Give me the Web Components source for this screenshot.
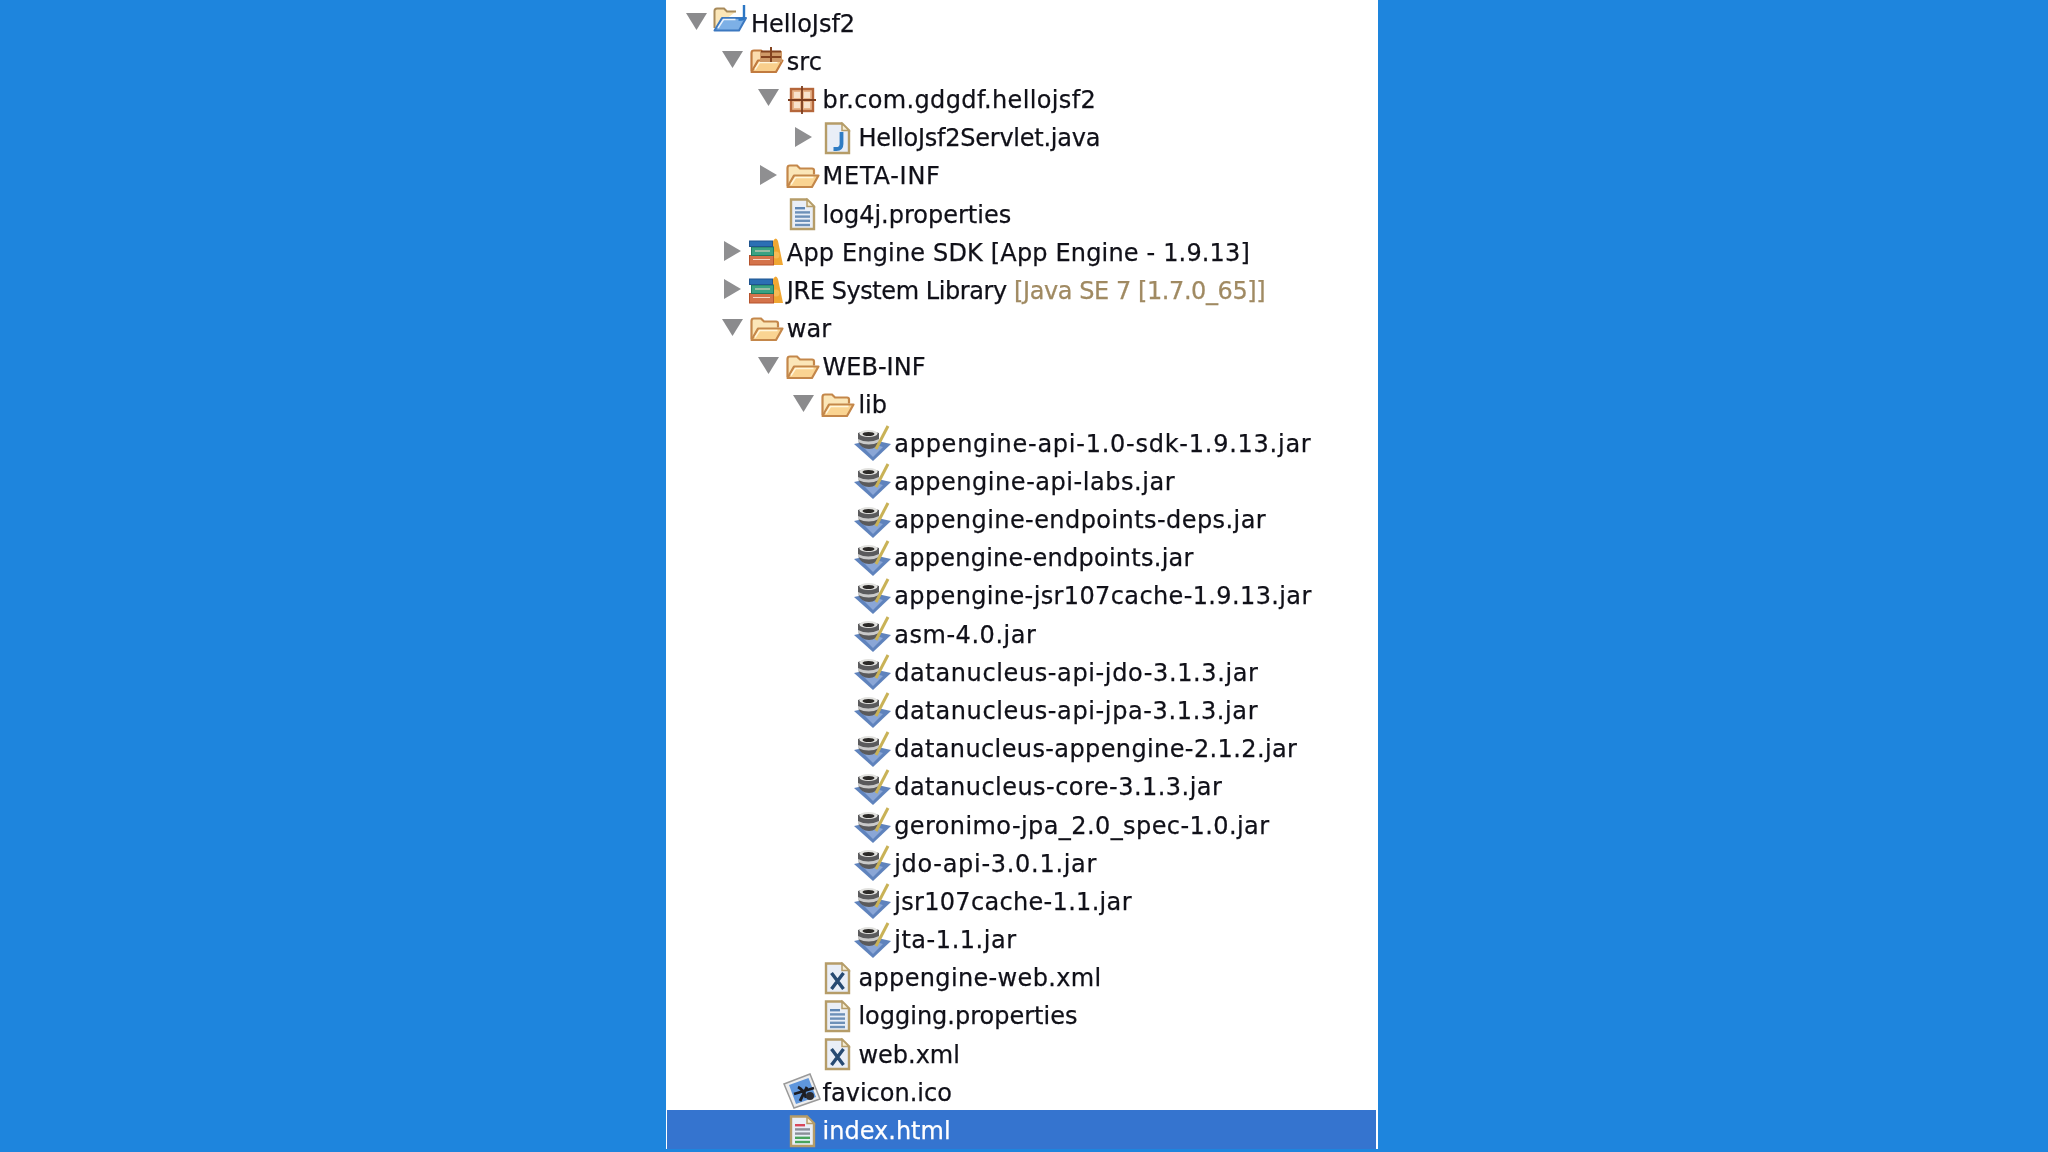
<!DOCTYPE html>
<html>
<head>
<meta charset="utf-8">
<title>HelloJsf2</title>
<style>
  html, body { margin: 0; height: 100%; background: #1e85dd; overflow: hidden; }
  body { display: flex; padding-left: 666px; }
</style>
</head>
<body>
<tree-panel>
  <tree-row depth="0" twisty="open" icon="project">HelloJsf2</tree-row>
  <tree-row depth="1" twisty="open" icon="srcfolder">src</tree-row>
  <tree-row depth="2" twisty="open" icon="package" track="0.36">br.com.gdgdf.hellojsf2</tree-row>
  <tree-row depth="3" twisty="closed" icon="java" track="-0.25">HelloJsf2Servlet.java</tree-row>
  <tree-row depth="2" twisty="closed" icon="folder">META-INF</tree-row>
  <tree-row depth="2" icon="doc">log4j.properties</tree-row>
  <tree-row depth="1" twisty="closed" icon="library">App Engine SDK [App Engine - 1.9.13]</tree-row>
  <tree-row depth="1" twisty="closed" icon="library" track="-0.42">JRE System Library <span slot="note">[Java SE 7 [1.7.0_65]]</span></tree-row>
  <tree-row depth="1" twisty="open" icon="folder">war</tree-row>
  <tree-row depth="2" twisty="open" icon="folder" track="0">WEB-INF</tree-row>
  <tree-row depth="3" twisty="open" icon="folder">lib</tree-row>
  <tree-row depth="4" icon="jar">appengine-api-1.0-sdk-1.9.13.jar</tree-row>
  <tree-row depth="4" icon="jar">appengine-api-labs.jar</tree-row>
  <tree-row depth="4" icon="jar">appengine-endpoints-deps.jar</tree-row>
  <tree-row depth="4" icon="jar">appengine-endpoints.jar</tree-row>
  <tree-row depth="4" icon="jar">appengine-jsr107cache-1.9.13.jar</tree-row>
  <tree-row depth="4" icon="jar">asm-4.0.jar</tree-row>
  <tree-row depth="4" icon="jar">datanucleus-api-jdo-3.1.3.jar</tree-row>
  <tree-row depth="4" icon="jar">datanucleus-api-jpa-3.1.3.jar</tree-row>
  <tree-row depth="4" icon="jar">datanucleus-appengine-2.1.2.jar</tree-row>
  <tree-row depth="4" icon="jar">datanucleus-core-3.1.3.jar</tree-row>
  <tree-row depth="4" icon="jar">geronimo-jpa_2.0_spec-1.0.jar</tree-row>
  <tree-row depth="4" icon="jar">jdo-api-3.0.1.jar</tree-row>
  <tree-row depth="4" icon="jar">jsr107cache-1.1.jar</tree-row>
  <tree-row depth="4" icon="jar">jta-1.1.jar</tree-row>
  <tree-row depth="3" icon="xml">appengine-web.xml</tree-row>
  <tree-row depth="3" icon="doc">logging.properties</tree-row>
  <tree-row depth="3" icon="xml">web.xml</tree-row>
  <tree-row depth="2" icon="image">favicon.ico</tree-row>
  <tree-row depth="2" icon="html" selected>index.html</tree-row>
</tree-panel>

<script>
const FILE = (inner) => `
  <path d="M6 4.500h16l7 7v22.500H6z" fill="#e9eef7" stroke="#b59c68" stroke-width="2.400"/>
  <path d="M22 4.500v7h7z" fill="#f6edd2" stroke="#b59c68" stroke-width="1.500"/>
  ${inner}`;

const LINES = (colors) => colors.map((c, i) =>
  `<rect x="10" y="${12 + i * 4.2}" width="${i === 0 ? 10 : 15}" height="2.400" fill="${c}"/>`).join('');

const OPEN_FOLDER = (back, front, edge) => `
  <path d="M2.500 29V11q0-2.500 2.500-2.500h7l3 3h12q2 0 2 2v4" fill="${back}" stroke="${edge}" stroke-width="2.200"/>
  <path d="M2.500 30 9 18.500h24.500L27 30z" fill="${front}" stroke="${edge}" stroke-width="2.200" stroke-linejoin="round"/>
  <path d="M6 27.500 10.500 20.500h18" fill="none" stroke="#fff6dc" stroke-width="1.400"/>`;

const ICONS = {
  folder: OPEN_FOLDER('#fbe6b8', '#fad492', '#c4874a'),
  project: `
    <path d="M1.500 24V7q0-2.500 2.500-2.500h7l3 3h9" fill="#fbe6b8" stroke="#a88a5a" stroke-width="2"/>
    <path d="M1.500 26.500 9 14h18l6 0-7 12.500z" fill="#7db0e6" stroke="#3c78c0" stroke-width="2" stroke-linejoin="round"/>
    <path d="M5 24 10.500 15.500h12" fill="none" stroke="#eaf2fb" stroke-width="1.500"/>
    <path d="M31 1v11.500q0 3-3 3h-2.500" fill="none" stroke="#2b76c4" stroke-width="2.400"/>`,
  srcfolder: `
    ${OPEN_FOLDER('#fbdcae', '#f9cf8c', '#c17b3f')}
    <rect x="11" y="9" width="22" height="11" fill="#cf9a68"/>
    <path d="M22 5v15M12 9.500h20M12 15h20" stroke="#83431f" stroke-width="2" fill="none"/>`,
  package: `
    <rect x="6" y="9" width="22" height="22" fill="#e8b48a" stroke="#b5663a" stroke-width="2.400"/>
    <rect x="9" y="12" width="6" height="6" fill="#f8e2cc"/>
    <rect x="19" y="12" width="6" height="6" fill="#f8e2cc"/>
    <rect x="9" y="22" width="6" height="6" fill="#f8e2cc"/>
    <rect x="19" y="22" width="6" height="6" fill="#f8e2cc"/>
    <path d="M17 6v28M3 20h28" stroke="#7c3d1e" stroke-width="1.800"/>`,
  java: FILE(`<path d="M21.500 13v12q0 5-5 5h-3" fill="none" stroke="#2f7cc4" stroke-width="3.800"/>`),
  doc: FILE(LINES(['#5e86b4', '#6d90b8', '#6d90b8', '#6d90b8', '#6d90b8'])),
  xml: FILE(`<path d="M11.500 14 23.500 30M23.500 14 11.500 30" stroke="#274a72" stroke-width="3.400"/>`),
  html: FILE(LINES(['#d8475a', '#8a8f98', '#8a8f98', '#49a45c', '#49a45c'])),
  library: `
    <path d="M24 8q3-5 5 0l5 24h-10z" fill="#f0a733"/>
    <circle cx="27" cy="22" r="3.500" fill="#f6bb55"/>
    <rect x="0.500" y="22.500" width="24" height="9.500" fill="#d4734b" stroke="#b5532c"/>
    <rect x="2.500" y="14" width="22" height="8.500" fill="#3aa283" stroke="#1f7a5e"/>
    <rect x="0.500" y="8" width="23" height="5.500" fill="#2b6fb4" stroke="#1f548f"/>
    <path d="M4 26.500h17M6 18h15" stroke="#f6d7c4" stroke-width="1"/>`,
  jar: `
    <path d="M-2 20 17 16 35 20 17 37z" fill="#5f83bd"/>
    <path d="M7 23 17 20 27 23 17 33z" fill="#8aa6d6"/>
    <path d="M2 9q10-4 21 0v8q-2 8-10 8t-11-8z" fill="#5a5a5c"/>
    <path d="M2 15q10 5 21 0v3q-10 5-21 0z" fill="#c9c9c9"/>
    <ellipse cx="12.500" cy="9.500" rx="9" ry="3.600" fill="#e2e2df"/>
    <ellipse cx="12.500" cy="10" rx="6" ry="2" fill="#2c2a28"/>
    <path d="M20 25 32 2" stroke="#c9b257" stroke-width="3"/>`,
  image: `
    <path d="M-1 11 25 1 35 26 9 35z" fill="#ededed" stroke="#9a9a9a" stroke-width="1.500"/>
    <path d="M4 12 23.500 5 31 24 11 31z" fill="#5f96dc"/>
    <path d="M13 14q6 3 8 11M22 14l-7 14M9 21l20-6" stroke="#1c1c22" stroke-width="2.800" fill="none"/>
    <circle cx="25" cy="23" r="4" fill="#2a2a30"/>`
};

class TreeIcon extends HTMLElement {
  connectedCallback() {
    const root = this.attachShadow({ mode: 'open' });
    root.innerHTML = `
      <style>
        :host { display: block; width: 36px; height: 36px; flex: none; }
        svg { display: block; overflow: visible; }
      </style>
      <svg width="36" height="36" viewBox="0 0 36 36">${ICONS[this.getAttribute('name')] || ''}</svg>`;
  }
}

class TreePanel extends HTMLElement {
  constructor() {
    super();
    this.attachShadow({ mode: 'open' }).innerHTML = `
      <style>
        :host {
          display: block;
          width: 712px;
          height: 1149px;
          box-sizing: border-box;
          padding: 3px 2px 0 1px;
          background: #fff;
          font: 24px "DejaVu Sans", sans-serif;
          color: #101018;
          -webkit-text-stroke: 0.25px currentColor;
          filter: blur(0.55px);
        }
      </style>
      <slot></slot>`;
  }
}

class TreeRow extends HTMLElement {
  connectedCallback() {
    const depth = Number(this.getAttribute('depth') || 0);
    const twisty = this.getAttribute('twisty');
    const arrow = twisty === 'open'
      ? '<path d="M5 6h21L15.500 23z" fill="#8b8b8d"/>'
      : twisty === 'closed'
        ? '<path d="M7 5 24 15 7 25z" fill="#8f8f91"/>'
        : '';
    // the reference font has much wider hyphens, spread the difference over the label
    const text = this.textContent;
    const hyphens = text.split('-').length - 1;
    const track = this.hasAttribute('track')
      ? Number(this.getAttribute('track'))
      : hyphens * 6 / text.length;
    const root = this.attachShadow({ mode: 'open' });
    root.innerHTML = `
      <style>
        :host {
          display: flex;
          align-items: center;
          height: 38.2px;
          box-sizing: border-box;
          padding-left: calc(14px + ${depth} * 35.8px);
          white-space: nowrap;
          letter-spacing: ${track}px;
        }
        :host([selected]) { background: #3574cf; color: #fff; }
        .twisty { width: 32px; height: 30px; flex: none; display: block; }
        .label { margin-left: 2px; padding-top: 3px; }
        ::slotted([slot="note"]) { color: #a08a62; }
      </style>
      <svg class="twisty" viewBox="0 0 32 30">${arrow}</svg>
      <tree-icon name="${this.getAttribute('icon')}"></tree-icon>
      <span class="label"><slot></slot><slot name="note"></slot></span>`;
  }
}

customElements.define('tree-icon', TreeIcon);
customElements.define('tree-panel', TreePanel);
customElements.define('tree-row', TreeRow);
</script>
</body>
</html>
